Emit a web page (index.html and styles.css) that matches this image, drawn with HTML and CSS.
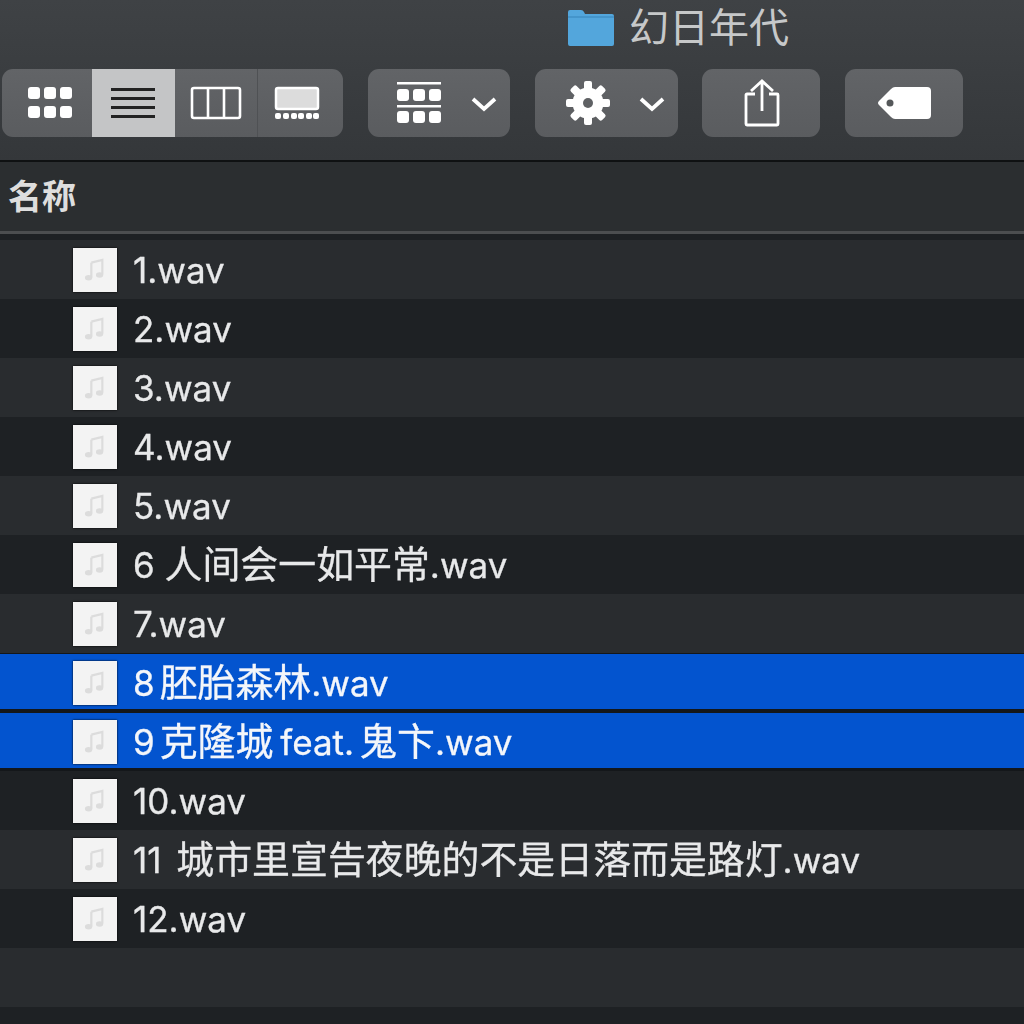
FILE: index.html
```html
<!DOCTYPE html>
<html lang="zh-CN">
<head>
<meta charset="utf-8">
<title>幻日年代</title>
<link rel="stylesheet" href="styles.css">
</head>
<body>
<svg class="defs" width="0" height="0" aria-hidden="true">
  <symbol id="note" viewBox="0 0 24 26">
    <path d="M8 5 L20 2 V18" fill="none" stroke="currentColor" stroke-width="2.4"/>
    <path d="M8 5 V21" fill="none" stroke="currentColor" stroke-width="2.4"/>
    <ellipse cx="5" cy="21.500" rx="4" ry="3" fill="currentColor"/>
    <ellipse cx="17" cy="18.500" rx="4" ry="3" fill="currentColor"/>
  </symbol>
</svg>
<div class="window">
  <header class="toolbar">
    <div class="title">
      <svg class="folder" width="50" height="38" viewBox="0 0 50 38">
        <path d="M2 3 Q2 1 4 1 H15 Q17 1 18 3 L19 5 H46 Q48 5 48 7 V35 Q48 37 46 37 H4 Q2 37 2 35 Z" fill="#53a6dc"/>
        <path d="M2 8 H48" stroke="#3f8fc6" stroke-width="1.500"/>
      </svg>
      <span>幻日年代</span>
    </div>
    <div class="tools">
      <div class="group views">
        <div class="seg seg-icons">
          <svg width="46" height="34" viewBox="0 0 46 34" fill="#fff">
            <rect x="1" y="1" width="12" height="12" rx="3"/><rect x="17" y="1" width="12" height="12" rx="3"/><rect x="33" y="1" width="12" height="12" rx="3"/>
            <rect x="1" y="20" width="12" height="12" rx="3"/><rect x="17" y="20" width="12" height="12" rx="3"/><rect x="33" y="20" width="12" height="12" rx="3"/>
          </svg>
        </div>
        <div class="seg seg-list">
          <svg width="46" height="34" viewBox="0 0 46 34" fill="#222">
            <rect x="1" y="2" width="44" height="3"/><rect x="1" y="11" width="44" height="3"/><rect x="1" y="20" width="44" height="3"/><rect x="1" y="29" width="44" height="3"/>
          </svg>
        </div>
        <div class="seg seg-cols">
          <svg width="52" height="34" viewBox="0 0 52 34" fill="none" stroke="#fff" stroke-width="2.600">
            <rect x="2" y="2" width="48" height="30" rx="2"/><path d="M18 2 V32 M34 2 V32"/>
          </svg>
        </div>
        <div class="seg seg-gallery">
          <svg width="46" height="34" viewBox="0 0 46 34" fill="#fff">
            <rect x="2" y="2" width="42" height="21" rx="2" fill="#dcdcdc" stroke="#fff" stroke-width="2.500"/>
            <rect x="1" y="27" width="6" height="6" rx="2"/><rect x="9" y="27" width="6" height="6" rx="2"/><rect x="17" y="27" width="6" height="6" rx="2"/><rect x="24" y="27" width="6" height="6" rx="2"/><rect x="32" y="27" width="6" height="6" rx="2"/><rect x="39" y="27" width="6" height="6" rx="2"/>
          </svg>
        </div>
      </div>
      <div class="group btn btn-arrange">
        <svg width="46" height="42" viewBox="0 0 46 42" fill="#fff">
          <rect x="1" y="0" width="44" height="2.500"/>
          <rect x="1" y="7" width="12" height="12" rx="3"/><rect x="17" y="7" width="12" height="12" rx="3"/><rect x="33" y="7" width="12" height="12" rx="3"/>
          <rect x="1" y="23" width="44" height="2.500"/>
          <rect x="1" y="29" width="12" height="12" rx="3"/><rect x="17" y="29" width="12" height="12" rx="3"/><rect x="33" y="29" width="12" height="12" rx="3"/>
        </svg>
        <svg class="chev" width="26" height="16" viewBox="0 0 26 16"><path d="M2 3 L13 13 L24 3" fill="none" stroke="#fff" stroke-width="3.800"/></svg>
      </div>
      <div class="group btn btn-action">
        <svg width="46" height="46" viewBox="0 0 46 46" fill="#fff">
          <rect x="19" y="1" width="8" height="44" rx="2"/>
          <rect x="19" y="1" width="8" height="44" rx="2" transform="rotate(45 23 23)"/>
          <rect x="19" y="1" width="8" height="44" rx="2" transform="rotate(90 23 23)"/>
          <rect x="19" y="1" width="8" height="44" rx="2" transform="rotate(135 23 23)"/>
          <circle cx="23" cy="23" r="15.500"/>
          <circle cx="23" cy="23" r="5" fill="#5f6164"/>
        </svg>
        <svg class="chev" width="26" height="16" viewBox="0 0 26 16"><path d="M2 3 L13 13 L24 3" fill="none" stroke="#fff" stroke-width="3.800"/></svg>
      </div>
      <div class="group btn btn-share">
        <svg width="36" height="48" viewBox="0 0 36 48" fill="none" stroke="#fff" stroke-width="2.800">
          <path d="M11 15 H3 Q2 15 2 16 V45 Q2 46 3 46 H33 Q34 46 34 45 V16 Q34 15 33 15 H25"/>
          <path d="M18 32 V2 M7 12 L18 2 L29 12"/>
        </svg>
      </div>
      <div class="group btn btn-tag">
        <svg width="56" height="34" viewBox="0 0 56 34">
          <path d="M3 15 L15 3 Q17 1 19 1 H51 Q55 1 55 5 V29 Q55 33 51 33 H19 Q17 33 15 31 L3 19 Q1 17 3 15 Z" fill="#fff"/>
          <circle cx="14" cy="17" r="3.500" fill="#55585a"/>
        </svg>
      </div>
    </div>
  </header>
  <div class="colhead"><span>名称</span></div>
  <main class="list">
    <div class="row"><svg class="file"><use href="#note"/></svg><span class="name">1.wav</span></div>
    <div class="row"><svg class="file"><use href="#note"/></svg><span class="name">2.wav</span></div>
    <div class="row"><svg class="file"><use href="#note"/></svg><span class="name">3.wav</span></div>
    <div class="row"><svg class="file"><use href="#note"/></svg><span class="name">4.wav</span></div>
    <div class="row"><svg class="file"><use href="#note"/></svg><span class="name">5.wav</span></div>
    <div class="row"><svg class="file"><use href="#note"/></svg><span class="name">6 <span class="cjk">人间会一如平常</span>.wav</span></div>
    <div class="row"><svg class="file"><use href="#note"/></svg><span class="name">7.wav</span></div>
    <div class="row selected"><svg class="file"><use href="#note"/></svg><span class="name">8<span class="cjk tight">胚胎森林</span>.wav</span></div>
    <div class="row selected"><svg class="file"><use href="#note"/></svg><span class="name">9<span class="cjk tight">克隆城</span><span class="near"> feat.</span><span class="cjk tight">鬼卞</span>.wav</span></div>
    <div class="row"><svg class="file"><use href="#note"/></svg><span class="name">10.wav</span></div>
    <div class="row"><svg class="file"><use href="#note"/></svg><span class="name">11 <span class="cjk tight">城市里宣告夜晚的不是日落而是路灯</span>.wav</span></div>
    <div class="row"><svg class="file"><use href="#note"/></svg><span class="name">12.wav</span></div>
    <div class="row"></div>
  </main>
</div>
</body>
</html>
```
FILE: styles.css
```css
* { box-sizing: border-box; }
html, body { margin: 0; height: 100%; background: #1e2124; }
body { overflow: hidden; font-family: Inter, "Noto Sans CJK SC", sans-serif; }
.defs { position: absolute; }
.window { width: 1024px; height: 1024px; display: flex; flex-direction: column; filter: blur(0.5px); }

.toolbar {
  height: 162px;
  border-bottom: 2px solid #0f1112;
  background: linear-gradient(#3f4245, #34373a);
  padding-left: 2px;
}
.title {
  height: 69px;
  padding: 0 0 13px 564px;
  display: flex;
  align-items: center;
  gap: 13px;
  color: #c6c8c9;
  font-size: 40px;
  line-height: 1;
}
.tools { display: flex; height: 68px; }
.group {
  height: 68px;
  border-radius: 11px;
  background: linear-gradient(#626467, #5a5c5f);
  display: flex;
  align-items: center;
}
.views { width: 341px; overflow: hidden; margin-right: 25px; }
.seg { height: 100%; display: flex; align-items: center; justify-content: center; }
.seg-icons { width: 90px; padding-left: 6px; }
.seg-list { width: 83px; background: #c4c5c6; padding-right: 2px; }
.seg-cols { width: 82px; }
.seg-gallery { width: 86px; border-left: 1px solid #4f5154; padding-right: 8px; }
.btn { justify-content: center; }
.btn-arrange { width: 142px; margin-right: 25px; gap: 29px; padding-left: 15px; }
.btn-action { width: 143px; margin-right: 24px; gap: 28px; padding-left: 16px; }
.btn-share { width: 118px; margin-right: 25px; padding-left: 2px; }
.btn-tag { width: 118px; }
.chev { margin-top: 2px; }

.colhead {
  height: 72px;
  border-bottom: 3px solid #4c4e50;
  background: #2b2e30;
  padding-left: 8px;
  display: flex;
  align-items: center;
  color: #dedede;
  font-size: 34px;
  font-weight: 700;
}
.colhead span { margin-top: -4px; }

.list { padding-top: 6px; flex: 1; }
.row {
  height: 59px;
  padding-left: 73px;
  display: flex;
  align-items: center;
  gap: 16px;
  background: #292c2f;
  color: #e8e9ea;
  font-size: 35px;
  white-space: pre;
}
.row:nth-child(even) { background: #1e2124; }
.row.selected {
  background: linear-gradient(#0354cf, #0354cf) 0 1px / 100% 55px no-repeat, #14171a;
  color: #f4f6fa;
}
.name { line-height: 50px; -webkit-text-stroke: 0.3px currentColor; }
.cjk { font-size: 37.9px; line-height: 0; }
.tight { margin-left: 5px; }
.near { word-spacing: -3px; }
.file {
  width: 44px;
  height: 44px;
  padding: 10px 11px;
  background: #f3f3f3;
  color: #dcdcdc;
  box-shadow: 0 0 2px #000;
  flex: none;
}
```
